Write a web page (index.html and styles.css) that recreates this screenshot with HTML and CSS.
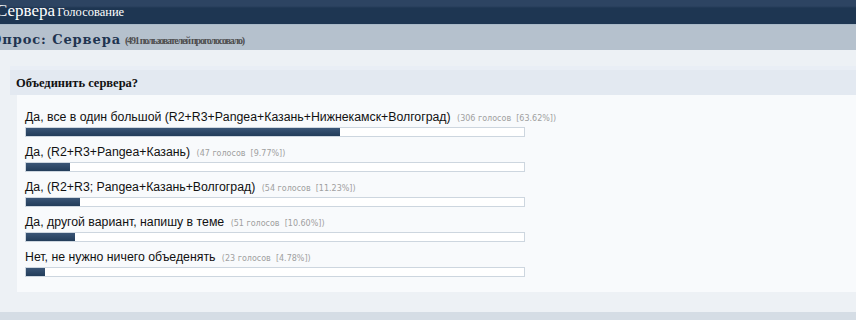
FILE: index.html
```html
<!DOCTYPE html>
<html lang="ru">
<head>
    <meta charset="UTF-8">
    <title>Сервера - Голосование</title>
    <link rel="stylesheet" href="styles.css">
</head>
<body>
    <div class="topbar">
        <span class="site">Сервера</span> <span class="section">Голосование</span>
    </div>
    <div class="pollbar">
        <b>Опрос: Сервера</b> <span class="count">(491 пользователей проголосовало)</span>
    </div>
    <div class="main">
        <div class="question">Объединить сервера?</div>
        <div class="answers">
            <div class="answer">
                <div class="label">Да, все в один большой (R2+R3+Pangea+Казань+Нижнекамск+Волгоград) <span class="votes">(306 голосов&nbsp; [63.62%])</span></div>
                <div class="bar"><div class="fill" style="width: 63%"></div></div>
            </div>
            <div class="answer">
                <div class="label">Да, (R2+R3+Pangea+Казань) <span class="votes">(47 голосов&nbsp; [9.77%])</span></div>
                <div class="bar"><div class="fill" style="width: 8.8%"></div></div>
            </div>
            <div class="answer">
                <div class="label">Да, (R2+R3; Pangea+Казань+Волгоград) <span class="votes">(54 голосов&nbsp; [11.23%])</span></div>
                <div class="bar"><div class="fill" style="width: 10.8%"></div></div>
            </div>
            <div class="answer">
                <div class="label">Да, другой вариант, напишу в теме <span class="votes">(51 голосов&nbsp; [10.60%])</span></div>
                <div class="bar"><div class="fill" style="width: 9.8%"></div></div>
            </div>
            <div class="answer">
                <div class="label">Нет, не нужно ничего объеденять <span class="votes">(23 голосов&nbsp; [4.78%])</span></div>
                <div class="bar"><div class="fill" style="width: 3.8%"></div></div>
            </div>
        </div>
    </div>
    <div class="bottom"></div>
</body>
</html>
```

FILE: styles.css
```css
body {
    margin: 0;
    padding: 0;
    background-color: #edf1f5;
    font-family: 'Liberation Sans', Arial, sans-serif;
    overflow: hidden;
}
.topbar {
    height: 24px;
    background: linear-gradient(#2d4462 0, #2d4462 6px, #1e3652 8px, #1e3652 100%);
    border-bottom: 1px solid #a9b9c8;
    color: #fff;
    font-family: 'Liberation Serif', 'DejaVu Serif', serif;
    white-space: nowrap;
    margin-left: -4px;
    line-height: 22px;
}
.site {
    font-size: 17px;
}
.section {
    font-size: 12.5px;
    margin-left: -2px;
}
.pollbar {
    height: 25px;
    line-height: 27px;
    background-color: #b5c1cd;
    font-family: 'Liberation Serif', serif;
    white-space: nowrap;
    margin-left: -10px;
}
.pollbar b {
    font-family: 'DejaVu Serif', serif;
    font-size: 13px;
    letter-spacing: 0.9px;
    color: #1f3450;
}
.pollbar .count {
    font-size: 10px;
    font-weight: bold;
    letter-spacing: -1.2px;
    color: #4d4d4d;
}
.main {
    padding: 16px 0 20px 10px;
}
.question {
    height: 25px;
    line-height: 27px;
    background-color: #e3e9f1;
    border-top: 4px solid #e9eef5;
    padding-left: 6px;
    font-family: 'Liberation Serif', serif;
    font-size: 12.5px;
    font-weight: bold;
    color: #111;
}
.answers {
    margin-left: 7px;
    background-color: #f8fafc;
    padding: 15px 0 15px 8px;
}
.answer {
    margin-bottom: 8px;
}
.answer:last-child {
    margin-bottom: 0;
}
.label {
    height: 15px;
    font-size: 12.3px;
    line-height: 15px;
    color: #111;
    margin-bottom: 2px;
    white-space: nowrap;
}
.votes {
    font-family: 'DejaVu Sans', Verdana, sans-serif;
    font-size: 8px;
    line-height: 1;
    color: #a0a0a0;
    margin-left: 3px;
}
.bar {
    width: 498px;
    height: 8px;
    border: 1px solid #cdd6df;
    background-color: #fff;
}
.fill {
    height: 100%;
    background: linear-gradient(#3a5576, #233d5a);
}
.bottom {
    height: 20px;
    background-color: #d5dde5;
}
```
